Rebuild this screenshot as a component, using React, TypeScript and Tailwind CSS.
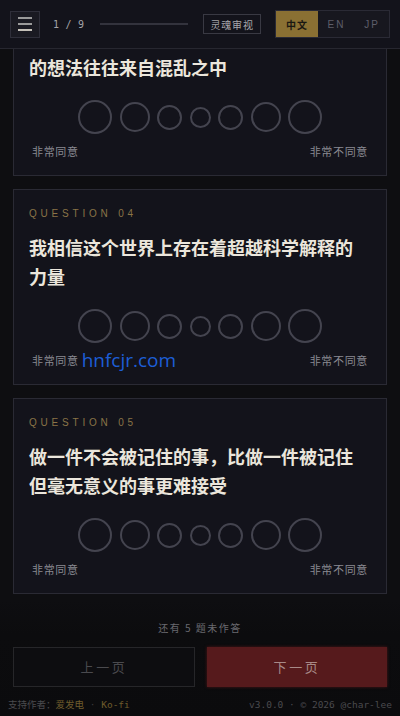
import React from "react";

const CIRCLES = [
  "w-[34px] h-[34px]",
  "w-[30px] h-[30px]",
  "w-[25px] h-[25px]",
  "w-[21px] h-[21px]",
  "w-[25px] h-[25px]",
  "w-[30px] h-[30px]",
  "w-[34px] h-[34px]",
];

function Scale({ watermark }: { watermark?: boolean }) {
  return (
    <>
      <div className="mt-[18px] flex items-center justify-center gap-[7.5px]">
        {CIRCLES.map((c, i) => (
          <span
            key={i}
            className={`${c} shrink-0 rounded-full border-2 border-[#44444f]`}
          />
        ))}
      </div>
      <div className="mt-[9px] flex items-center justify-between px-[3px] text-[11px] leading-[16px] tracking-[0.06em] text-[#8a8a92]">
        <span className="relative">
          非常同意
          {watermark && (
            <span className="absolute left-full top-1/2 ml-[3px] -translate-y-1/2 whitespace-nowrap font-['Open_Sans',sans-serif] text-[19px] leading-none tracking-normal text-[#1d5ed6]">
              hnfcjr.com
            </span>
          )}
        </span>
        <span>非常不同意</span>
      </div>
    </>
  );
}

function Card({
  num,
  lines,
  watermark,
}: {
  num: string;
  lines: string[];
  watermark?: boolean;
}) {
  return (
    <section className="shrink-0 border border-[#2a2a34] bg-[#13131b] px-[15px] pt-4 pb-4">
      <div className="font-['Liberation_Sans',sans-serif] text-[10px] leading-[15px] tracking-[0.38em] text-[#8a7447]">
        QUESTION {num}
      </div>
      <h2 className="mt-3 text-[18px] font-bold leading-[29px] text-[#ebe6dc]">
        {lines.map((l, i) => (
          <div key={i}>{l}</div>
        ))}
      </h2>
      <Scale watermark={watermark} />
    </section>
  );
}

export default function App() {
  return (
    <div className="relative flex h-[716px] w-[400px] flex-col overflow-hidden bg-[#0e0e11] font-['Noto_Sans_CJK_SC',sans-serif]">
      <header className="flex h-[49px] shrink-0 items-center border-b border-[#272730] bg-[#13131b] px-[10px]">
        <button className="flex h-[27px] w-[30px] flex-col items-center justify-center gap-[4.5px] border border-[#2f2f3a] bg-[#1a1a22]">
          <span className="h-[1.5px] w-[14px] bg-[#9a9a9a]" />
          <span className="h-[1.5px] w-[14px] bg-[#9a9a9a]" />
          <span className="h-[1.5px] w-[14px] bg-[#c4c0b8]" />
        </button>
        <span className="ml-[13px] font-['DejaVu_Sans_Mono',monospace] text-[10px] tracking-[0.02em] text-[#a4a4a8]">
          1 / 9
        </span>
        <span className="ml-[16px] h-[2px] w-[88px] bg-[#33333d]" />
        <button className="ml-[15px] flex h-[20px] w-[58px] items-center justify-center border border-[#393943] bg-[#13131b] text-[10px] tracking-[0.08em] text-[#a8a8ac]">
          灵魂审视
        </button>
        <div className="ml-auto flex h-[28px] items-stretch border border-[#2a2a35] bg-[#17171f] p-0">
          <span className="flex w-[42px] items-center justify-center bg-[#8a7033] text-[10px] font-bold tracking-[0.1em] text-[#1a1812]">
            中文
          </span>
          <span className="flex w-[37px] items-center justify-center font-['Liberation_Sans',sans-serif] text-[10px] tracking-[0.2em] text-[#5e5e6a]">
            EN
          </span>
          <span className="flex w-[34px] items-center justify-center font-['Liberation_Sans',sans-serif] text-[10px] tracking-[0.2em] text-[#5e5e6a]">
            JP
          </span>
        </div>
      </header>

      <main className="flex flex-col gap-[13px] px-[13px]">
        <section className="shrink-0 border border-t-0 border-[#2a2a34] bg-[#13131b] px-[15px] pt-[4px] pb-4">
          <h2 className="text-[18px] font-bold leading-[29px] text-[#ebe6dc]">
            的想法往往来自混乱之中
          </h2>
          <Scale />
        </section>
        <Card
          num="04"
          lines={["我相信这个世界上存在着超越科学解释的", "力量"]}
          watermark
        />
        <Card
          num="05"
          lines={["做一件不会被记住的事，比做一件被记住", "但毫无意义的事更难接受"]}
        />
      </main>

      <footer className="mt-auto flex h-[116px] shrink-0 flex-col bg-gradient-to-b from-[#0e0e11]/0 via-[#0c0c0e] via-30% to-[#0b0b0d] px-[13px] pt-[20px]">
        <div className="text-center text-[10px] leading-[15px] tracking-[0.15em] text-[#6a6a70]">
          还有 5 题未作答
        </div>
        <div className="mt-[12px] flex gap-[12px]">
          <button className="flex h-[40px] flex-1 items-center justify-center border border-[#262629] bg-[#0d0d10] text-[13px] tracking-[0.2em] text-[#4a4a4e]">
            上一页
          </button>
          <button className="flex h-[40px] flex-1 items-center justify-center bg-[#561a1c] text-[13px] tracking-[0.2em] text-[#a88a88] shadow-[0_0_3px_rgba(120,30,30,0.6)]">
            下一页
          </button>
        </div>
        <div className="-mx-[5px] mt-[12px] flex items-center justify-between font-['DejaVu_Sans_Mono','Noto_Sans_CJK_SC',monospace] text-[9.5px] leading-[12px] text-[#4a4a4d]">
          <span>
            支持作者：<span className="text-[#6e5b2c]">爱发电</span>
            <span className="text-[#3a3a3c]"> · </span>
            <span className="text-[#6e5b2c]">Ko-fi</span>
          </span>
          <span>v3.0.0 · © 2026 @char-lee</span>
        </div>
      </footer>
    </div>
  );
}
